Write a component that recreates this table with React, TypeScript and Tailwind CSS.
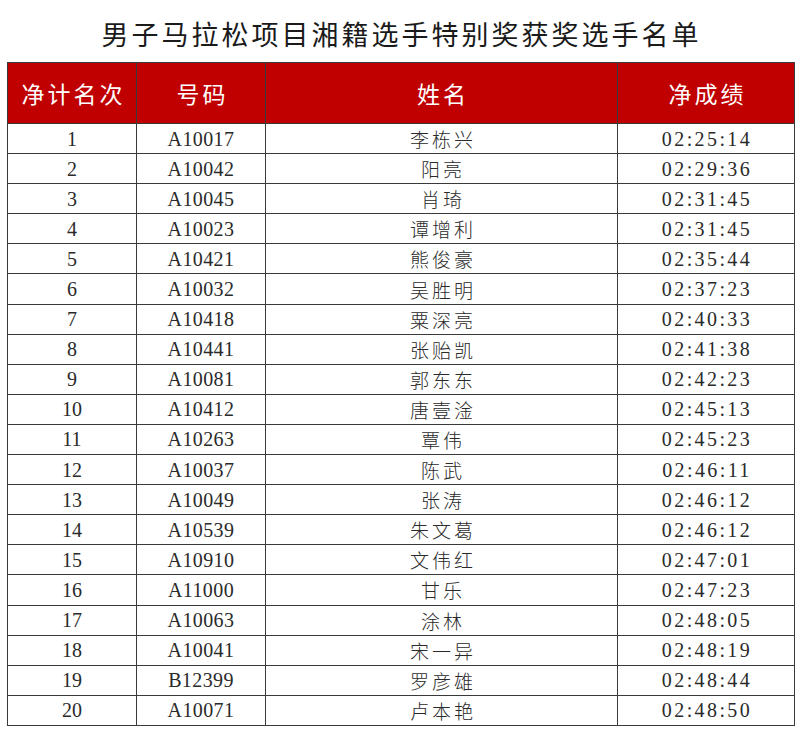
const rows: [string, string, string][] = [
  ["A10017", "李栋兴", "02:25:14"],
  ["A10042", "阳亮", "02:29:36"],
  ["A10045", "肖琦", "02:31:45"],
  ["A10023", "谭增利", "02:31:45"],
  ["A10421", "熊俊豪", "02:35:44"],
  ["A10032", "吴胜明", "02:37:23"],
  ["A10418", "粟深亮", "02:40:33"],
  ["A10441", "张贻凯", "02:41:38"],
  ["A10081", "郭东东", "02:42:23"],
  ["A10412", "唐壹淦", "02:45:13"],
  ["A10263", "覃伟", "02:45:23"],
  ["A10037", "陈武", "02:46:11"],
  ["A10049", "张涛", "02:46:12"],
  ["A10539", "朱文葛", "02:46:12"],
  ["A10910", "文伟红", "02:47:01"],
  ["A11000", "甘乐", "02:47:23"],
  ["A10063", "涂林", "02:48:05"],
  ["A10041", "宋一异", "02:48:19"],
  ["B12399", "罗彦雄", "02:48:44"],
  ["A10071", "卢本艳", "02:48:50"],
];

const cjk = "font-['Noto_Sans_CJK_SC',sans-serif]";
const num = "font-['Liberation_Serif','Noto_Sans_CJK_SC',serif]";

export default function App() {
  return (
    <div className="w-[800px] h-[730px] bg-white overflow-hidden">
      <h1
        className={`${cjk} h-[62px] flex items-center justify-center pt-[6px] text-[27px] font-normal tracking-[3px] text-[#1a1a1a]`}
      >
        <span className="pl-[3px]">男子马拉松项目湘籍选手特别奖获奖选手名单</span>
      </h1>
      <table className="ml-[7px] w-[787px] border-collapse table-fixed text-[#2a2a2a]">
        <colgroup>
          <col className="w-[129px]" />
          <col className="w-[129px]" />
          <col className="w-[352px]" />
          <col className="w-[177px]" />
        </colgroup>
        <thead>
          <tr className="h-[61px] bg-[#c00000] text-white">
            {["净计名次", "号码", "姓名", "净成绩"].map((h) => (
              <th
                key={h}
                className={`${cjk} border border-[#3a3a3a] text-[23px] font-normal tracking-[3px] text-center align-middle`}
              >
                <span className="pl-[3px]">{h}</span>
              </th>
            ))}
          </tr>
        </thead>
        <tbody>
          {rows.map(([id, name, time], i) => (
            <tr key={id} className="h-[30.1px]">
              <td className={`${num} border border-[#3a3a3a] text-center text-[20px] leading-none`}>
                {i + 1}
              </td>
              <td className={`${num} border border-[#3a3a3a] text-center text-[20px] leading-none tracking-[0.4px]`}>
                {id}
              </td>
              <td className={`${cjk} border border-[#3a3a3a] text-center text-[19px] font-light leading-none tracking-[3px]`}>
                <span className="pl-[3px]">{name}</span>
              </td>
              <td className={`${num} border border-[#3a3a3a] text-center text-[20px] leading-none tracking-[2.4px]`}>
                <span className="pl-[2px]">{time}</span>
              </td>
            </tr>
          ))}
        </tbody>
      </table>
    </div>
  );
}
